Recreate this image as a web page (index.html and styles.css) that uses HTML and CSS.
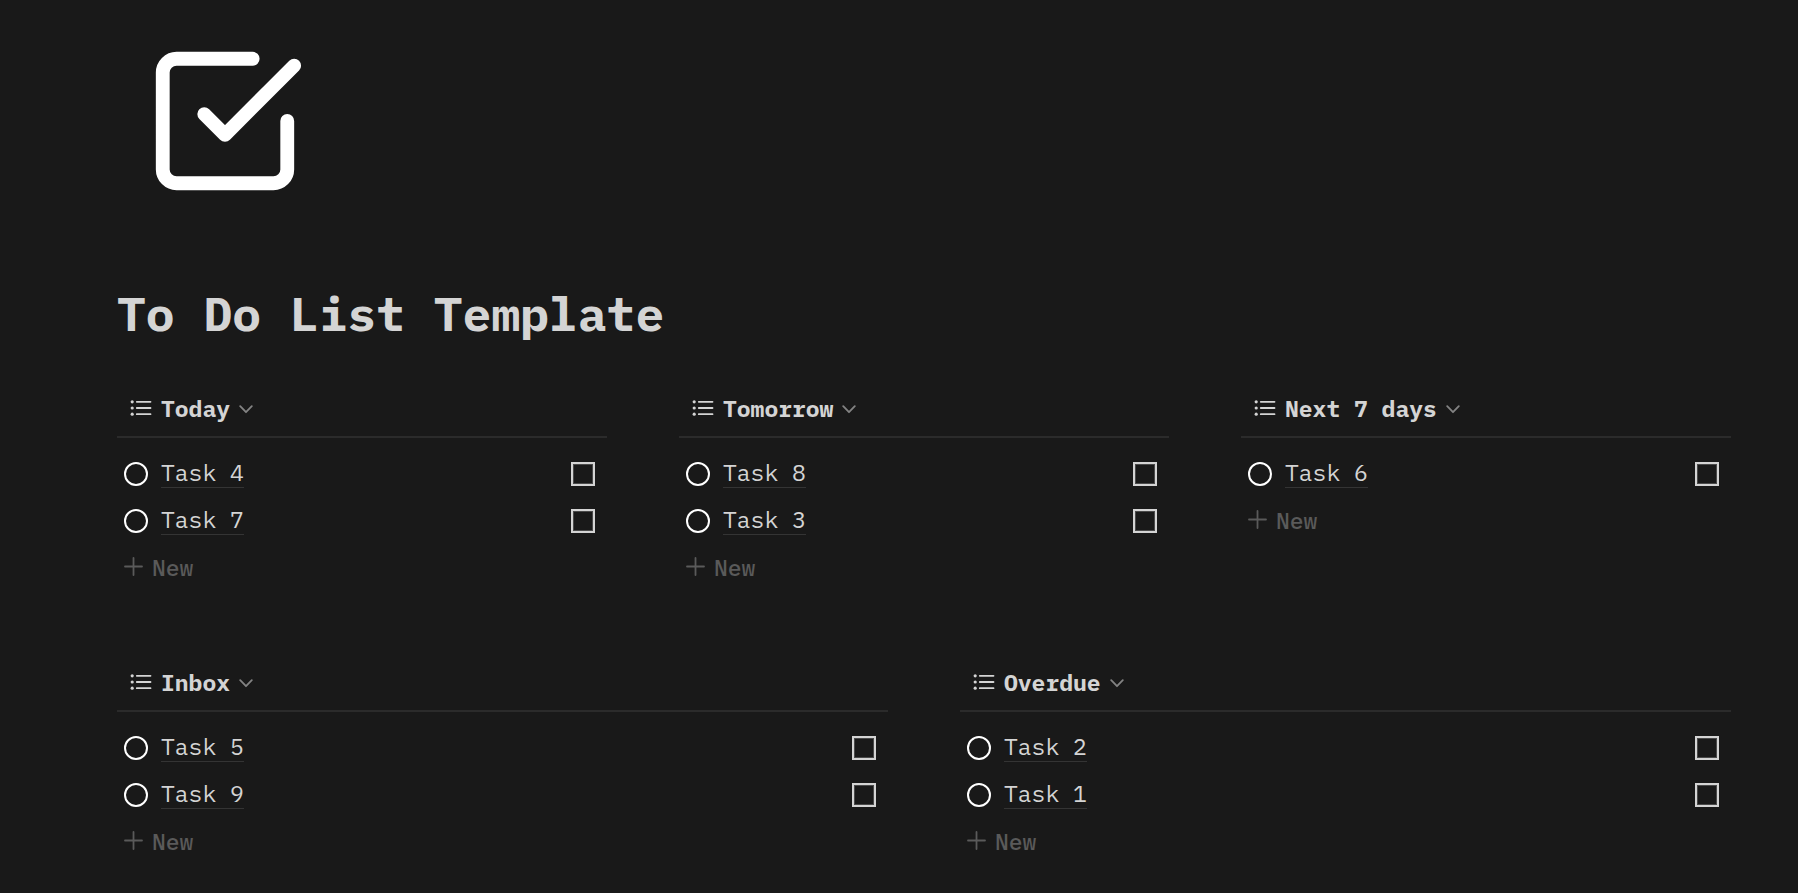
FILE: index.html
```html
<!DOCTYPE html>
<html lang="en">
<head>
<meta charset="utf-8">
<meta name="viewport" content="width=device-width, initial-scale=1">
<title>To Do List Template</title>
<link rel="stylesheet" href="styles.css">
</head>
<body>
<svg class="symbols" aria-hidden="true">
  <symbol id="list" viewBox="0 0 22 18">
    <g fill="currentColor"><circle cx="2.2" cy="2.8" r="1.6"/><circle cx="2.2" cy="9" r="1.6"/><circle cx="2.2" cy="15.2" r="1.6"/></g>
    <path d="M6.8 2.8H20.5M6.8 9H20.5M6.8 15.2H20.5" fill="none" stroke="currentColor" stroke-width="1.8" stroke-linecap="round"/>
  </symbol>
  <symbol id="chevron" viewBox="0 0 14 14">
    <path d="M1.2 5.2L7 11.2L12.8 5.2" fill="none" stroke="currentColor" stroke-width="1.8" stroke-linecap="round" stroke-linejoin="round"/>
  </symbol>
  <symbol id="ring" viewBox="0 0 24 24">
    <circle cx="12" cy="12" r="11" fill="none" stroke="currentColor" stroke-width="2"/>
  </symbol>
  <symbol id="plus" viewBox="0 0 19 19">
    <path d="M9.5 1V18M1 9.5H18" fill="none" stroke="currentColor" stroke-width="1.8" stroke-linecap="round"/>
  </symbol>
</svg>
<main class="page">
  <svg class="page-icon" viewBox="0 0 24 24" aria-hidden="true">
    <path d="M9 11L12 14L22 4M21 12v7a2 2 0 0 1-2 2H5a2 2 0 0 1-2-2V5a2 2 0 0 1 2-2h11"/>
  </svg>
  <h1 class="page-title">To Do List Template</h1>

  <div class="board board-three">
    <section class="list">
      <h2 class="list-header"><button class="view" type="button"><svg class="icon-list"><use href="#list"/></svg>Today<svg class="icon-chevron"><use href="#chevron"/></svg></button></h2>
      <ul class="tasks">
        <li class="task"><svg class="ring"><use href="#ring"/></svg><a class="task-name" id="task-4" href="#task-4">Task 4</a><input class="check" type="checkbox" aria-labelledby="task-4"></li>
        <li class="task"><svg class="ring"><use href="#ring"/></svg><a class="task-name" id="task-7" href="#task-7">Task 7</a><input class="check" type="checkbox" aria-labelledby="task-7"></li>
      </ul>
      <button class="new" type="button"><svg class="icon-plus"><use href="#plus"/></svg>New</button>
    </section>
    <section class="list">
      <h2 class="list-header"><button class="view" type="button"><svg class="icon-list"><use href="#list"/></svg>Tomorrow<svg class="icon-chevron"><use href="#chevron"/></svg></button></h2>
      <ul class="tasks">
        <li class="task"><svg class="ring"><use href="#ring"/></svg><a class="task-name" id="task-8" href="#task-8">Task 8</a><input class="check" type="checkbox" aria-labelledby="task-8"></li>
        <li class="task"><svg class="ring"><use href="#ring"/></svg><a class="task-name" id="task-3" href="#task-3">Task 3</a><input class="check" type="checkbox" aria-labelledby="task-3"></li>
      </ul>
      <button class="new" type="button"><svg class="icon-plus"><use href="#plus"/></svg>New</button>
    </section>
    <section class="list">
      <h2 class="list-header"><button class="view" type="button"><svg class="icon-list"><use href="#list"/></svg>Next 7 days<svg class="icon-chevron"><use href="#chevron"/></svg></button></h2>
      <ul class="tasks">
        <li class="task"><svg class="ring"><use href="#ring"/></svg><a class="task-name" id="task-6" href="#task-6">Task 6</a><input class="check" type="checkbox" aria-labelledby="task-6"></li>
      </ul>
      <button class="new" type="button"><svg class="icon-plus"><use href="#plus"/></svg>New</button>
    </section>
  </div>

  <div class="board board-two">
    <section class="list">
      <h2 class="list-header"><button class="view" type="button"><svg class="icon-list"><use href="#list"/></svg>Inbox<svg class="icon-chevron"><use href="#chevron"/></svg></button></h2>
      <ul class="tasks">
        <li class="task"><svg class="ring"><use href="#ring"/></svg><a class="task-name" id="task-5" href="#task-5">Task 5</a><input class="check" type="checkbox" aria-labelledby="task-5"></li>
        <li class="task"><svg class="ring"><use href="#ring"/></svg><a class="task-name" id="task-9" href="#task-9">Task 9</a><input class="check" type="checkbox" aria-labelledby="task-9"></li>
      </ul>
      <button class="new" type="button"><svg class="icon-plus"><use href="#plus"/></svg>New</button>
    </section>
    <section class="list">
      <h2 class="list-header"><button class="view" type="button"><svg class="icon-list"><use href="#list"/></svg>Overdue<svg class="icon-chevron"><use href="#chevron"/></svg></button></h2>
      <ul class="tasks">
        <li class="task"><svg class="ring"><use href="#ring"/></svg><a class="task-name" id="task-2" href="#task-2">Task 2</a><input class="check" type="checkbox" aria-labelledby="task-2"></li>
        <li class="task"><svg class="ring"><use href="#ring"/></svg><a class="task-name" id="task-1" href="#task-1">Task 1</a><input class="check" type="checkbox" aria-labelledby="task-1"></li>
      </ul>
      <button class="new" type="button"><svg class="icon-plus"><use href="#plus"/></svg>New</button>
    </section>
  </div>
</main>
</body>
</html>
```

FILE: styles.css
```css
* {
  box-sizing: border-box;
}

body {
  margin: 0;
  background: #191919;
  color: #d4d4d4;
  font-family: "IBM Plex Mono", "Liberation Mono", monospace;
  font-size: 23px;
  line-height: 24px;
}

button {
  border: 0;
  padding: 0;
  background: none;
  color: inherit;
  font: inherit;
  cursor: pointer;
}

svg {
  display: block;
  flex: none;
}

.symbols {
  display: none;
}

.page {
  padding: 38px 67px 24px 117px;
}

.page-icon {
  width: 166px;
  height: 166px;
  margin-left: 25px;
  fill: none;
  stroke: #fff;
  stroke-width: 2;
  stroke-linecap: round;
  stroke-linejoin: round;
}

.page-title {
  margin: 78px 0 38px;
  font-size: 48px;
  line-height: 62px;
  font-weight: 700;
}

.board {
  display: grid;
  column-gap: 72px;
}

.board-three {
  grid-template-columns: repeat(3, minmax(0, 1fr));
  margin-bottom: 65px;
}

.board-two {
  grid-template-columns: repeat(2, minmax(0, 1fr));
}

.list-header {
  display: flex;
  height: 56px;
  margin: 0 0 12px;
  padding-left: 13px;
  border-bottom: 2px solid #2b2b2b;
  font-size: 23px;
  font-weight: 700;
}

.view {
  display: flex;
  align-items: center;
  padding-bottom: 2px;
}

.icon-list {
  width: 22px;
  height: 18px;
  margin-right: 9px;
}

.icon-chevron {
  width: 14px;
  height: 14px;
  margin-left: 9px;
  color: #838383;
}

.tasks {
  margin: 0;
  padding: 0;
  list-style: none;
}

.task {
  display: flex;
  align-items: center;
  height: 47px;
  padding: 0 12px 0 7px;
}

.ring {
  width: 24px;
  height: 24px;
  margin-right: 13px;
  color: #fff;
}

.task-name {
  padding-bottom: 3px;
  border-bottom: 1px solid #343434;
  color: inherit;
  text-decoration: none;
}

.check {
  width: 24px;
  height: 24px;
  margin: 0 0 0 auto;
  appearance: none;
  border: 2px solid #d4d4d4;
  box-shadow: inset 0 0 0 1px #4a4a4a;
}

.check:checked {
  background: #d4d4d4;
}

.new {
  display: flex;
  align-items: center;
  gap: 9px;
  height: 47px;
  padding: 0 0 2px 7px;
  color: #5a5a5a;
  font-weight: 500;
}

.icon-plus {
  width: 19px;
  height: 19px;
}
```
